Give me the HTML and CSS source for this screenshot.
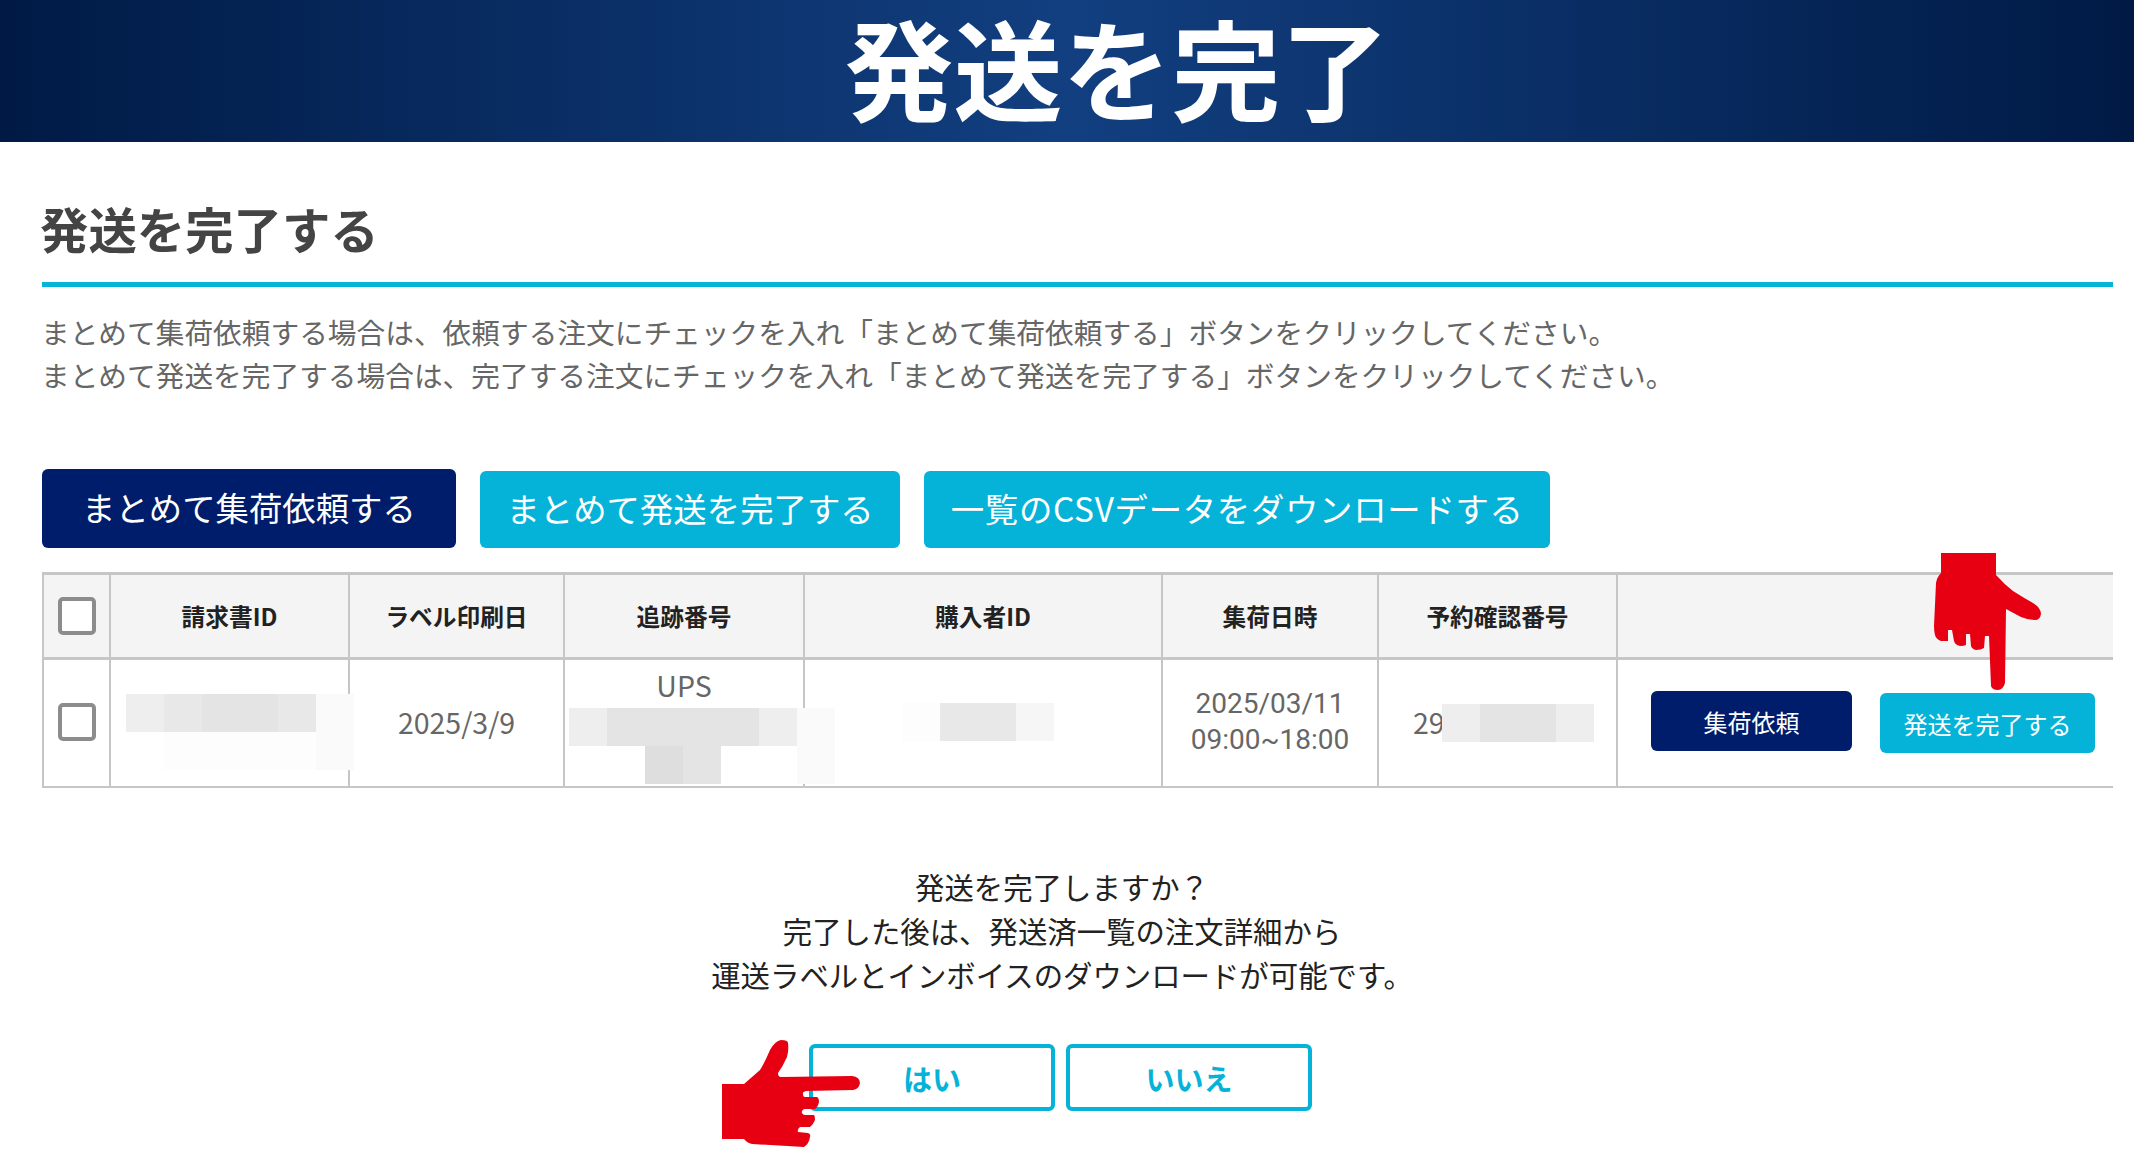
FILE: index.html
```html
<!DOCTYPE html>
<html lang="ja">
<head>
    <meta charset="UTF-8">
    <title>発送を完了</title>
    <link rel="stylesheet" href="styles.css">
</head>
<body>
    <header class="banner">
        <h1>発送を完了</h1>
    </header>
    <main class="content">
        <h2>発送を完了する</h2>
        <p class="desc">まとめて集荷依頼する場合は、依頼する注文にチェックを入れ「まとめて集荷依頼する」ボタンをクリックしてください。<br>まとめて発送を完了する場合は、完了する注文にチェックを入れ「まとめて発送を完了する」ボタンをクリックしてください。</p>
        <div class="actions">
            <button class="btn btn-navy btn-bulk">まとめて集荷依頼する</button>
            <button class="btn btn-cyan btn-bulk">まとめて発送を完了する</button>
            <button class="btn btn-cyan btn-bulk btn-csv">一覧のCSVデータをダウンロードする</button>
        </div>
        <table class="orders">
            <colgroup>
                <col class="col-check">
                <col class="col-invoice">
                <col class="col-date">
                <col class="col-track">
                <col class="col-buyer">
                <col class="col-pickup">
                <col class="col-confirm">
                <col>
            </colgroup>
            <thead>
                <tr>
                    <th><span class="check"></span></th>
                    <th>請求書ID</th>
                    <th>ラベル印刷日</th>
                    <th>追跡番号</th>
                    <th>購入者ID</th>
                    <th>集荷日時</th>
                    <th>予約確認番号</th>
                    <th></th>
                </tr>
            </thead>
            <tbody>
                <tr>
                    <td><span class="check"></span></td>
                    <td></td>
                    <td>2025/3/9</td>
                    <td class="cell-track">UPS</td>
                    <td></td>
                    <td class="cell-pickup">2025/03/11<br>09:00~18:00</td>
                    <td class="cell-confirm">29</td>
                    <td>
                        <div class="row-btns">
                            <button class="btn btn-navy btn-row">集荷依頼</button>
                            <button class="btn btn-cyan btn-row btn-row-low">発送を完了する</button>
                        </div>
                    </td>
                </tr>
            </tbody>
        </table>
        <div class="confirm">
            <p>発送を完了しますか？<br>完了した後は、発送済一覧の注文詳細から<br>運送ラベルとインボイスのダウンロードが可能です。</p>
            <div class="confirm-btns">
                <button class="btn-outline">はい</button>
                <button class="btn-outline">いいえ</button>
            </div>
        </div>
    </main>

    <!-- blurred personal data -->
    <div class="mosaic mosaic-invoice">
        <i class="s2"></i><i class="s3"></i><i class="s4"></i><i class="s4"></i><i class="s3"></i><i class="s0"></i>
        <i></i><i class="s00"></i><i class="s00"></i><i class="s00"></i><i class="s00"></i><i class="s0"></i>
    </div>
    <div class="mosaic mosaic-track">
        <i class="s2"></i><i class="s4"></i><i class="s4"></i><i class="s4"></i><i class="s4"></i><i class="s2"></i><i class="s0"></i>
        <i></i><i></i><i class="s5"></i><i class="s4"></i><i></i><i></i><i class="s0"></i>
    </div>
    <div class="mosaic mosaic-buyer">
        <i class="s00"></i><i class="s3"></i><i class="s3"></i><i class="s1"></i>
    </div>
    <div class="mosaic mosaic-confirm">
        <i class="s2"></i><i class="s4"></i><i class="s4"></i><i class="s2"></i>
    </div>

    <svg class="hand hand-down" viewBox="0 0 108 138">
        <path d="M7 0H62V22Q70 31 79 38Q90 45 99 50Q107 55 107 61Q106 67 101 67Q94 67 87 64L72 56L71 130Q69 137 64 137Q58 137 57 133L55 83H51L50 95Q47 97 42 97Q38 96 37 93L36 81H32L32 92Q30 93 26 93Q21 92 20 88L18 77H14V88H7Q2 86 1 82Q0 78 0 73L2 30Q3 24 7 20Z"/>
    </svg>
    <svg class="hand hand-right" viewBox="0 0 138 107">
        <path d="M0 44H22L38 30Q43 22 48 10Q53 1 59 0Q66 0 66 3Q67 10 65 17Q61 26 56 33Q56 37 59 37L130 36Q138 37 138 43Q137 49 131 50L84 51Q80 52 81 54Q81 57 83 57H95Q97 58 97 62Q96 67 93 69H82Q79 71 80 73Q81 75 83 75H92Q93 76 93 80Q91 85 88 87H78Q75 89 76 92L86 93Q89 94 88 97Q87 104 82 107L30 104Q25 103 22 99H0Z"/>
    </svg>
</body>
</html>
```

FILE: styles.css
```css
body {
    margin: 0;
    position: relative;
    min-height: 1166px;
    overflow: hidden;
    background-color: #fff;
    font-family: "Noto Sans CJK JP", sans-serif;
    color: #666;
}
.banner {
    height: 142px;
    padding-left: 100px;
    display: flex;
    justify-content: center;
    align-items: center;
    background: linear-gradient(90deg, #001a45 0%, #123f80 50%, #001a45 100%);
}
h1 {
    margin: 0;
    padding-bottom: 10px;
    font-size: 109px;
    line-height: 130px;
    font-weight: 700;
    color: #fff;
}
.content {
    padding: 0 21px 0 42px;
}
h2 {
    margin: 56px 0 0;
    padding-bottom: 24px;
    font-size: 48.4px;
    line-height: 60px;
    font-weight: 700;
    text-indent: -2px;
    color: #444;
    border-bottom: 5px solid #06b4d9;
}
.desc {
    margin: 24px 0 0 -1px;
    font-size: 28.7px;
    line-height: 42.5px;
    white-space: nowrap;
}
.actions {
    margin-top: 73px;
    display: flex;
    align-items: flex-end;
    gap: 24px;
}
.btn {
    border: none;
    border-radius: 6px;
    color: #fff;
    font-family: inherit;
}
.btn-navy {
    background-color: #001d6b;
}
.btn-cyan {
    background-color: #05b3d9;
}
.btn-bulk {
    height: 77px;
    padding: 0 26.5px 4px;
    font-size: 33.4px;
}
.btn-bulk.btn-navy {
    height: 79px;
    padding: 0 40px 4px;
}
.btn-csv {
    letter-spacing: 0.7px;
}
.orders {
    margin-top: 24px;
    width: 2071px;
    table-layout: fixed;
    border-collapse: collapse;
}
.col-check { width: 67px; }
.col-invoice { width: 239px; }
.col-date { width: 215px; }
.col-track { width: 240px; }
.col-buyer { width: 358px; }
.col-pickup { width: 216px; }
.col-confirm { width: 239px; }
.orders th, .orders td {
    padding: 0;
    border: 2px solid #c6c6c6;
    text-align: center;
}
.orders th {
    height: 82px;
    background-color: #f4f4f4;
    border-top-width: 3px;
    border-bottom-width: 3px;
    font-size: 23.7px;
    font-weight: 700;
    color: #222;
}
.orders td {
    height: 124px;
    padding-bottom: 2px;
    font-size: 28.5px;
    line-height: 36px;
}
.orders th:last-child, .orders td:last-child {
    border-right: none;
}
.check {
    display: block;
    box-sizing: border-box;
    width: 38px;
    height: 38px;
    margin: 0 auto;
    background-color: #fff;
    border: 4px solid #8c8c8c;
    border-radius: 5px;
}
.orders .cell-track {
    height: 117px;
    vertical-align: top;
    padding-top: 7px;
}
.orders .cell-pickup {
    font-family: Roboto, sans-serif;
    font-size: 28px;
}
.orders .cell-confirm {
    text-align: left;
    padding-left: 34px;
}
.row-btns {
    display: flex;
    justify-content: flex-end;
    align-items: flex-start;
    gap: 28px;
    padding-right: 18px;
}
.btn-row {
    height: 60px;
    font-size: 24px;
    width: 201px;
}
.btn-row-low {
    width: 215px;
    margin-top: 2px;
}
.confirm {
    width: 2040px;
    margin-top: 76px;
    text-align: center;
}
.confirm p {
    margin: 0;
    font-size: 29.4px;
    line-height: 44px;
    color: #222;
}
.confirm-btns {
    margin: 48px 0 0 -3px;
    display: flex;
    justify-content: center;
    gap: 11px;
}
.btn-outline {
    width: 246px;
    height: 67px;
    box-sizing: border-box;
    background-color: #fff;
    border: 4px solid #05b3d9;
    border-radius: 6px;
    color: #05b3d9;
    font-family: inherit;
    font-size: 29px;
    font-weight: 700;
}
.mosaic {
    position: absolute;
    display: grid;
    grid-auto-rows: 38px;
    grid-template-columns: repeat(var(--cols), 38px);
}
.mosaic i { display: block; }
.mosaic-invoice { left: 126px; top: 694px; --cols: 6; }
.mosaic-track { left: 569px; top: 708px; --cols: 7; }
.mosaic-buyer { left: 902px; top: 703px; --cols: 4; }
.mosaic-confirm { left: 1442px; top: 704px; --cols: 4; }
.s00 { background-color: #fdfdfd; }
.s0 { background-color: #fafafa; }
.s1 { background-color: #f6f6f6; }
.s2 { background-color: #eeeeee; }
.s3 { background-color: #e8e8e8; }
.s4 { background-color: #e4e4e4; }
.s5 { background-color: #dedede; }
.hand {
    position: absolute;
    fill: #e60012;
}
.hand-down { left: 1934px; top: 553px; width: 108px; height: 138px; }
.hand-right { left: 722px; top: 1040px; width: 138px; height: 107px; }
```
